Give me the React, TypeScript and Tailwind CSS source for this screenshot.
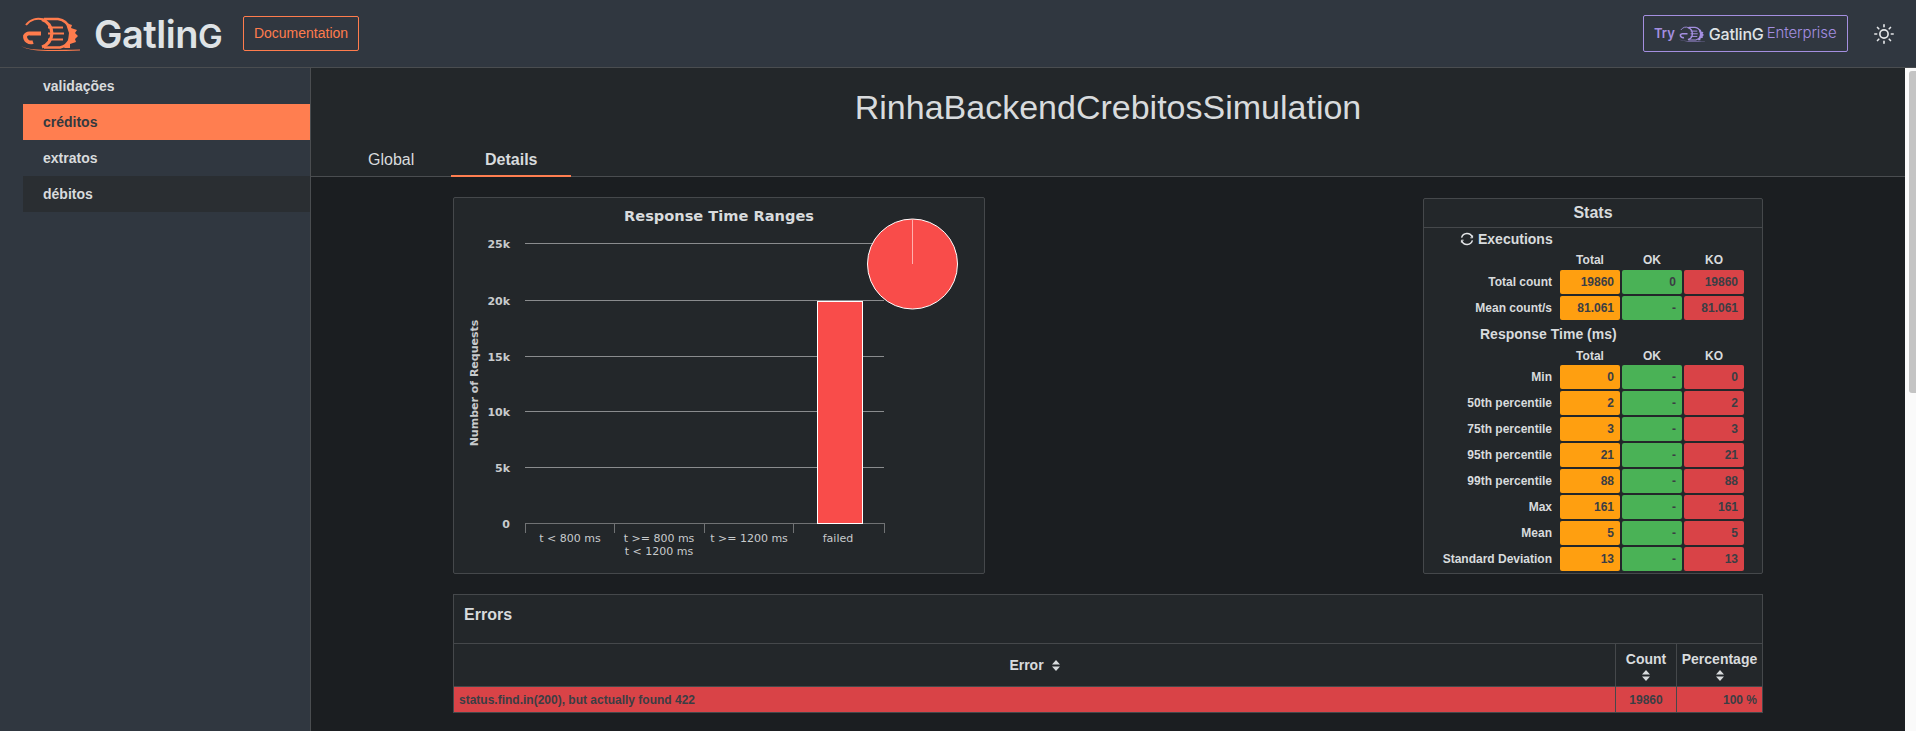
const ARIAL = "font-['Liberation_Sans',Arial,sans-serif]";

type StatRow = { label: string; total: string; ok: string; ko: string };

const EXECUTIONS: StatRow[] = [
  { label: "Total count", total: "19860", ok: "0", ko: "19860" },
  { label: "Mean count/s", total: "81.061", ok: "-", ko: "81.061" },
];

const RESPONSE_TIME: StatRow[] = [
  { label: "Min", total: "0", ok: "-", ko: "0" },
  { label: "50th percentile", total: "2", ok: "-", ko: "2" },
  { label: "75th percentile", total: "3", ok: "-", ko: "3" },
  { label: "95th percentile", total: "21", ok: "-", ko: "21" },
  { label: "99th percentile", total: "88", ok: "-", ko: "88" },
  { label: "Max", total: "161", ok: "-", ko: "161" },
  { label: "Mean", total: "5", ok: "-", ko: "5" },
  { label: "Standard Deviation", total: "13", ok: "-", ko: "13" },
];

const MENU = ["validações", "créditos", "extratos", "débitos"];

function GatlingMark({ className, color }: { className: string; color: string }) {
  return (
    <svg viewBox="20 15 60 36" className={className} fill="none">
      <path d="M26 24A15 15 0 0 1 44 19" stroke={color} strokeWidth="2" />
      <path d="M42 18.5A14.5 14.5 0 0 1 42 46" stroke={color} strokeWidth="3.2" />
      <path d="M41 32.5H30A5 5 0 0 0 25 35A6 6 0 0 0 33 41" stroke={color} strokeWidth="3.8" />
      <path d="M48 26.5H63M48 32.5H64M48 38.5H63" stroke={color} strokeWidth="2.2" />
      <path d="M44 18H58A15 15 0 0 1 70 28M44 46.5H60A14 14 0 0 0 70 38" stroke={color} strokeWidth="2.6" />
      <path d="M66 22L72 24L71 27L77 29L75 32L78 35L75 38L76 41L70 43L70 47L64 47L68 40L69 32L67 26Z" fill={color} />
      <path d="M21 45C30 50 50 49 80 48.5V49.5C50 50.5 30 51 21 45Z" fill={color} />
    </svg>
  );
}

function Header() {
  return (
    <header className="flex h-[68px] items-center border-b border-[#4a4d50] bg-[#303740] pr-[21px] pl-[20px]">
      <GatlingMark className="h-[36px] w-[60px]" color="#ff7c4d" />
      <span className="ml-[14px] w-[129px] font-['Inter',sans-serif] text-[38px] leading-none font-semibold tracking-[-0.5px] whitespace-nowrap text-[#dfe3e6]">
        Gatlin<span className="text-[33px]">G</span>
      </span>
      <a className="ml-[20px] flex h-[35px] w-[116px] items-center justify-center rounded-[2px] border border-[#ff7c4d] text-[14px] text-[#ff7c4d]">
        Documentation
      </a>
      <a className="ml-auto flex h-[37px] w-[205px] items-center rounded-[2px] border border-[#a48fe0] pl-[10px] font-['Inter',sans-serif]">
        <span className="text-[13px] font-semibold text-[#a48fe0]">Try</span>
        <GatlingMark className="ml-[3px] h-[16px] w-[27px]" color="#a48fe0" />
        <span className="ml-[4px] text-[16px] font-medium tracking-[-0.2px] text-[#dfe3e6]">GatlinG</span>
        <span className="ml-[3px] text-[15px] font-light tracking-[-0.1px] text-[#a48fe0]">Enterprise</span>
      </a>
      <svg viewBox="0 0 24 24" className="ml-[25px] h-[22px] w-[22px]" fill="none" stroke="#e4e6e8" strokeWidth="1.8" strokeLinecap="round">
        <circle cx="12" cy="12" r="4.5" />
        <path d="M12 2v2M12 20v2M2 12h2M20 12h2M4.9 4.9l1.4 1.4M17.7 17.7l1.4 1.4M4.9 19.1l1.4-1.4M17.7 6.3l1.4-1.4" />
      </svg>
    </header>
  );
}

function Sidebar() {
  return (
    <aside className="w-[311px] shrink-0 border-r border-[#4a4d50] bg-[#303740] pl-[23px]">
      <ul className="text-[14px] font-bold">
        {MENU.map((item, i) => (
          <li
            key={item}
            className={`flex h-[36px] items-center pl-[20px] ${
              i === 1 ? "bg-[#ff7e50] text-[#33393f]" : i === 3 ? "bg-[#2a2e32] text-[#d8dbdd]" : "text-[#d8dbdd]"
            }`}
          >
            {item}
          </li>
        ))}
      </ul>
    </aside>
  );
}

function RangesChart() {
  const grid: [string, number][] = [
    ["25k", 243],
    ["20k", 300],
    ["15k", 356],
    ["10k", 411],
    ["5k", 467],
    ["0", 523],
  ];
  const ticks = [525, 614, 704, 793, 884];
  return (
    <svg width="530" height="375" viewBox="454 198 530 375" className="block font-['DejaVu_Sans',sans-serif]">
      <text x="719" y="221" textAnchor="middle" fontSize="14.6" fontWeight="700" fill="#d8dbdd">
        Response Time Ranges
      </text>
      {grid.slice(0, 5).map(([, y]) => (
        <line key={y} x1="525" x2="884" y1={y + 0.5} y2={y + 0.5} stroke="#8a8c8e" />
      ))}
      {grid.map(([label, y]) => (
        <text key={label} x="510" y={y + 5} textAnchor="end" fontSize="11" fontWeight="700" fill="#c8cbcd">
          {label}
        </text>
      ))}
      <text
        transform="translate(478 383) rotate(-90)"
        textAnchor="middle"
        fontSize="11"
        fontWeight="700"
        fill="#c8cbcd"
      >
        Number of Requests
      </text>
      <line x1="525" x2="884" y1="523.5" y2="523.5" stroke="#707274" />
      {ticks.map((x) => (
        <line key={x} x1={x + 0.5} x2={x + 0.5} y1="523" y2="533" stroke="#707274" />
      ))}
      <g fontSize="11" fill="#c8cbcd" textAnchor="middle">
        <text x="570" y="542">t &lt; 800 ms</text>
        <text x="659" y="542">t &gt;= 800 ms</text>
        <text x="659" y="555">t &lt; 1200 ms</text>
        <text x="749" y="542">t &gt;= 1200 ms</text>
        <text x="838" y="542">failed</text>
      </g>
      <rect x="817.5" y="301.5" width="45" height="222" fill="#f94c4a" stroke="#ffffff" />
      <circle cx="912.5" cy="264" r="45" fill="#f94c4a" stroke="#ffffff" />
      <line x1="912.5" x2="912.5" y1="219" y2="264" stroke="#ffb0ae" />
    </svg>
  );
}

function StatCell({ value, color }: { value: string; color: string }) {
  return (
    <div className={`flex h-[24px] items-center justify-end rounded-[2px] pr-[6px] text-[#3b3e44] ${color}`}>{value}</div>
  );
}

function StatRows({ rows, headClass }: { rows: StatRow[]; headClass: string }) {
  return (
    <>
      <div className={`grid grid-cols-[134px_60px_60px_60px] items-center gap-x-[2px] text-center ${headClass}`}>
        <span />
        <span>Total</span>
        <span>OK</span>
        <span>KO</span>
      </div>
      {rows.map((r) => (
        <div key={r.label} className="mb-[2px] grid grid-cols-[134px_60px_60px_60px] items-center gap-x-[2px]">
          <span className="pr-[6px] text-right whitespace-nowrap">{r.label}</span>
          <StatCell value={r.total} color="bg-[#ff9f10]" />
          <StatCell value={r.ok} color="bg-[#4ab256]" />
          <StatCell value={r.ko} color="bg-[#d94347]" />
        </div>
      ))}
    </>
  );
}

function StatsCard() {
  return (
    <div className="h-[376px] w-[340px] rounded-[2px] border border-[#45484b] bg-[#23272a] text-[12px] font-bold text-[#d8dbdd]">
      <div className="flex h-[29px] items-center justify-center border-b border-[#45484b] text-[16px]">Stats</div>
      <div className="flex h-[22px] items-center pl-[36px] text-[14px]">
        <svg viewBox="0 0 14 14" className="h-[14px] w-[14px]" fill="none" stroke="#e4e6e8" strokeWidth="1.5">
          <path d="M1.6 5.6A5.6 5.6 0 0 1 12.2 5M12.4 8.4A5.6 5.6 0 0 1 1.8 9" />
          <path d="M12.6 3.4v2.4h-2.2M1.4 10.6V8.2h2.2" strokeWidth="1" />
        </svg>
        <span className="ml-[4px]">Executions</span>
      </div>
      <StatRows rows={EXECUTIONS} headClass="h-[20px]" />
      <div className="flex h-[24px] items-center pl-[56px] text-[14px]">Response Time (ms)</div>
      <StatRows rows={RESPONSE_TIME} headClass="h-[19px]" />
    </div>
  );
}

function SortIcon() {
  return (
    <svg viewBox="0 0 8 11" className="h-[11px] w-[8px]" fill="#d8dbdd">
      <path d="M4 0l4 4.4H0zM4 11l4-4.4H0z" />
    </svg>
  );
}

function ErrorsCard() {
  return (
    <div className="mt-[20px] w-[1310px] border border-[#45484b] bg-[#23272a] text-[#d8dbdd]">
      <div className="h-[49px] border-b border-[#45484b] pt-[8px] pl-[10px] text-[16px] font-bold">Errors</div>
      <div className="flex h-[43px] border-b border-[#45484b] text-[14px] font-bold">
        <div className="flex flex-1 items-center justify-center gap-[8px]">
          Error <SortIcon />
        </div>
        <div className="flex w-[61px] flex-col items-center justify-center border-l border-[#45484b]">
          Count
          <SortIcon />
        </div>
        <div className="flex w-[86px] flex-col items-center justify-center border-l border-[#45484b]">
          Percentage
          <SortIcon />
        </div>
      </div>
      <div className="flex h-[25px] items-center bg-[#d94347] text-[12px] font-bold text-[#3b3e44]">
        <div className="flex-1 pl-[5px]">status.find.in(200), but actually found 422</div>
        <div className="flex h-full w-[61px] items-center justify-center border-l border-[#45484b]">19860</div>
        <div className="flex h-full w-[86px] items-center justify-end border-l border-[#45484b] pr-[5px]">100 %</div>
      </div>
    </div>
  );
}

export default function App() {
  return (
    <div className={`flex h-[731px] flex-col overflow-hidden bg-[#1b1e21] ${ARIAL}`}>
      <Header />
      <div className="flex min-h-0 flex-1">
        <Sidebar />
        <main className="min-w-0 flex-1">
          <div className="h-[109px] border-b border-[#4a4d50] bg-[#23272a]">
            <h1 className="pt-[19px] text-center text-[34px] leading-[40px] text-[#d8dbdd]">
              RinhaBackendCrebitosSimulation
            </h1>
            <nav className="mt-[19px] flex pl-[57px] text-[16px] text-[#d8dbdd]">
              <span className="h-[31px] leading-[28px]">Global</span>
              <span className="ml-[37px] h-[31px] w-[120px] border-b-2 border-[#ff7e50] text-center leading-[28px] font-bold">
                Details
              </span>
            </nav>
          </div>
          <div className="pt-[20px] pl-[142px]">
            <div className="flex w-[1310px] items-end justify-between">
              <div className="h-[377px] w-[532px] rounded-[2px] border border-[#45484b] bg-[#23272a]">
                <RangesChart />
              </div>
              <StatsCard />
            </div>
            <ErrorsCard />
          </div>
        </main>
        <div className="w-[11px] shrink-0 bg-[#fafafa] pt-[3px] pl-[4px]">
          <div className="h-[322px] w-[7px] rounded-l-[3px] bg-[#c4c4c4]" />
        </div>
      </div>
    </div>
  );
}
